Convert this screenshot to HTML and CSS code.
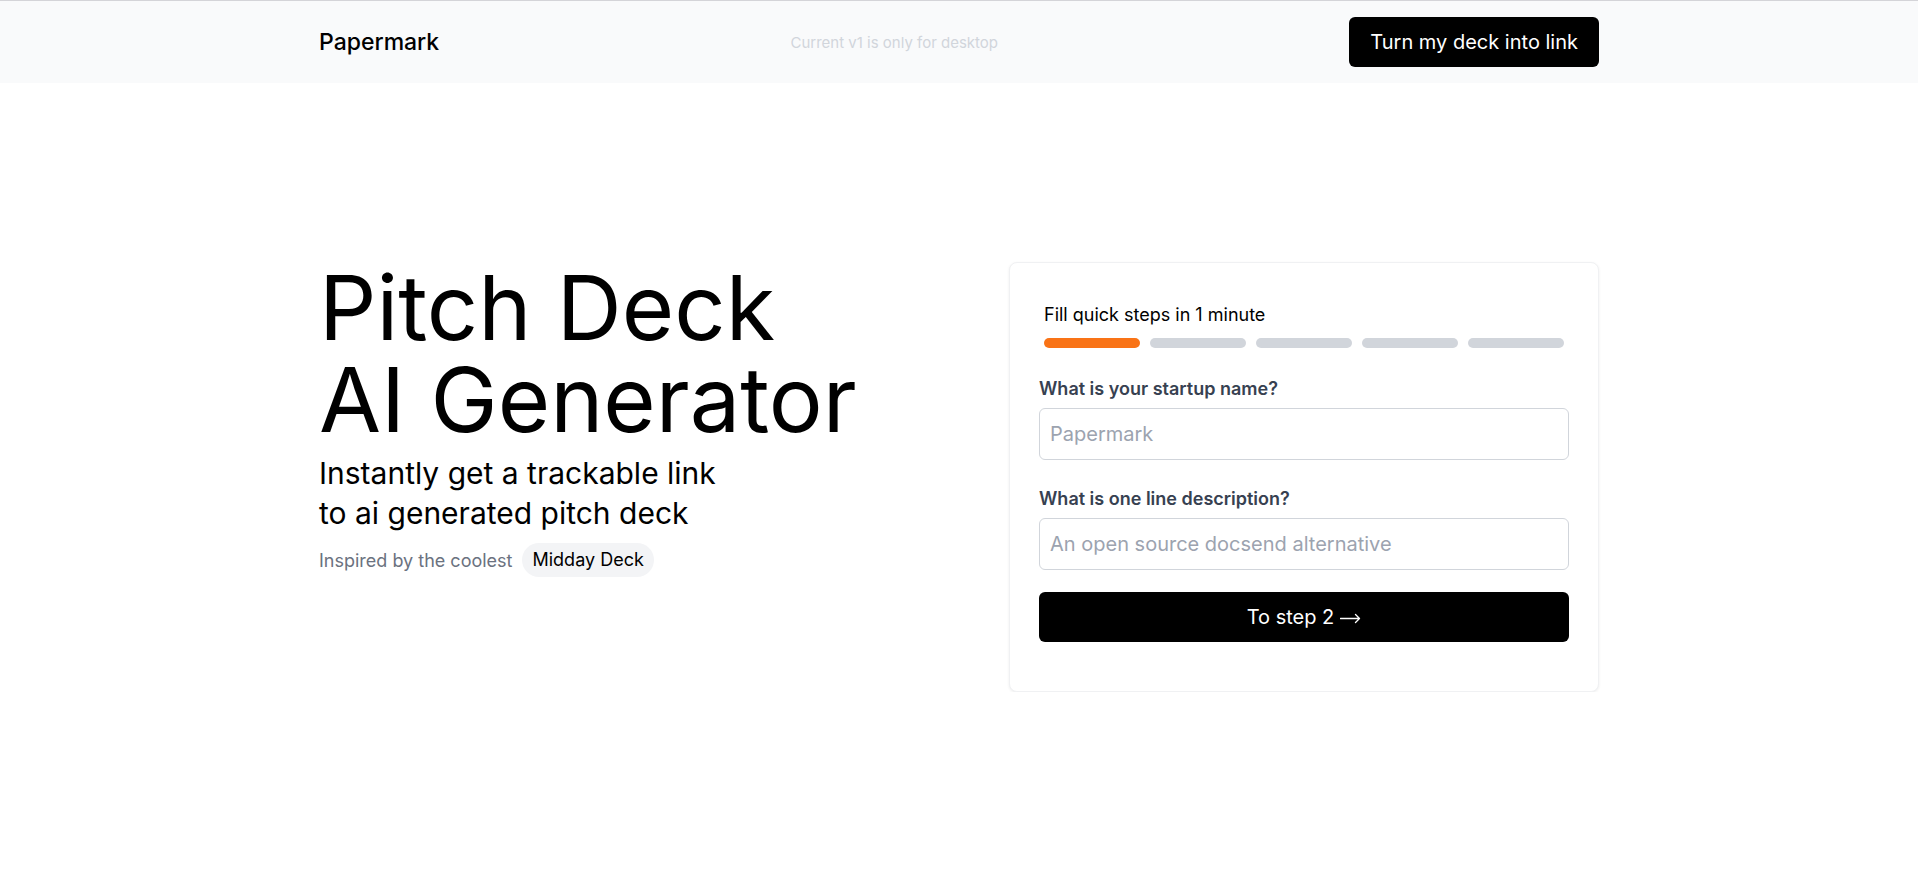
FILE: index.html
```html
<!DOCTYPE html>
<html lang="en">
<head>
<meta charset="utf-8">
<title>Papermark – Pitch Deck AI Generator</title>
<link rel="stylesheet" href="styles.css">
</head>
<body>
<header class="topbar">
  <div class="topbar-inner">
    <div class="brand">Papermark</div>
    <div class="notice">Current v1 is only for desktop</div>
    <button class="cta" type="button">Turn my deck into link</button>
  </div>
</header>
<main class="hero">
  <section class="hero-left">
    <h1 class="title">Pitch Deck<br>AI Generator</h1>
    <p class="subtitle">Instantly get a trackable link<br>to ai generated pitch deck</p>
    <div class="inspired">
      <span class="inspired-text">Inspired by the coolest</span>
      <span class="pill">Midday Deck</span>
    </div>
  </section>
  <section class="card">
    <div class="steps">
      <div class="steps-title">Fill quick steps in 1 minute</div>
      <div class="bars">
        <span class="bar bar-active"></span>
        <span class="bar"></span>
        <span class="bar"></span>
        <span class="bar"></span>
        <span class="bar"></span>
      </div>
    </div>
    <form class="form">
      <div class="field">
        <label class="label" for="name">What is your startup name?</label>
        <input class="input" id="name" type="text" placeholder="Papermark">
      </div>
      <div class="field">
        <label class="label" for="desc">What is one line description?</label>
        <input class="input" id="desc" type="text" placeholder="An open source docsend alternative">
      </div>
      <button class="submit" type="button">To step 2 <svg class="arrow" width="21" height="12" viewBox="0 0 21 12" aria-hidden="true"><path d="M0.5 6.5H19.5M15.5 2.5L19.5 6.5L15.5 10.5" fill="none" stroke="#fff" stroke-width="1.3" stroke-linecap="round" stroke-linejoin="round"/></svg></button>
    </form>
  </section>
</main>
</body>
</html>
```
FILE: styles.css
```css
* { box-sizing: border-box; }

body {
  margin: 0;
  font-family: Inter, "Noto Sans", sans-serif;
  color: #000;
  background: #fff;
}

.topbar {
  border-top: 1px solid #d4d4d8;
  background: #f9fafb;
}

.topbar-inner {
  max-width: 1280px;
  margin: 0 auto;
  padding: 16px 0;
  display: flex;
  align-items: center;
  justify-content: space-between;
}

.brand {
  font-size: 23px;
  font-weight: 500;
  line-height: 32px;
}

.notice {
  font-size: 15px;
  color: #d1d5db;
}

.cta {
  font-family: inherit;
  font-size: 20px;
  line-height: 28px;
  height: 50px;
  padding: 0 21px;
  border: none;
  border-radius: 6px;
  background: #000;
  color: #fff;
}

.hero {
  max-width: 1280px;
  margin: 0 auto;
  padding-top: 179px;
  display: flex;
  align-items: flex-start;
  justify-content: space-between;
}

.title {
  margin: 0;
  font-size: 90px;
  line-height: 92px;
  font-weight: 400;
  letter-spacing: 0;
}

.subtitle {
  margin: 7px 0 0;
  font-size: 30px;
  line-height: 40px;
}

.inspired {
  margin-top: 10px;
  display: flex;
  align-items: center;
  gap: 10px;
}

.inspired-text {
  font-size: 18px;
  color: #6b7280;
}

.pill {
  font-size: 18px;
  line-height: 28px;
  padding: 3px 10px;
  border-radius: 9999px;
  background: #f3f4f6;
}

.card {
  width: 590px;
  border: 1px solid #f0f1f3;
  border-radius: 8px;
  background: #fff;
  box-shadow: 0 1px 3px rgba(0, 0, 0, 0.07);
  padding: 38px 29px 49px;
}

.steps {
  padding: 0 5px;
}

.steps-title {
  font-size: 18px;
  line-height: 28px;
}

.bars {
  margin-top: 9px;
  display: grid;
  grid-template-columns: repeat(5, 1fr);
  gap: 10px;
}

.bar {
  height: 10px;
  border-radius: 9999px;
  background: #d1d5db;
}

.bar-active {
  background: #f97316;
}

.form {
  margin: 27px 0 0;
  display: flex;
  flex-direction: column;
  gap: 25px;
}

.field {
  display: flex;
  flex-direction: column;
  gap: 5px;
}

.label {
  font-size: 18px;
  line-height: 28px;
  font-weight: 600;
  color: #374151;
}

.input {
  font-family: inherit;
  font-size: 20px;
  line-height: 28px;
  height: 52px;
  padding: 0 10px;
  border: 1px solid #d1d5db;
  border-radius: 6px;
  color: #111827;
  background: #fff;
}

.input::placeholder {
  color: #9ca3af;
}

.submit {
  margin-top: -3px;
  font-family: inherit;
  font-size: 20px;
  line-height: 28px;
  height: 50px;
  border: none;
  border-radius: 6px;
  background: #000;
  color: #fff;
  display: flex;
  align-items: center;
  justify-content: center;
  gap: 6px;
}

.arrow {
  display: block;
  margin-top: 1px;
}
```
